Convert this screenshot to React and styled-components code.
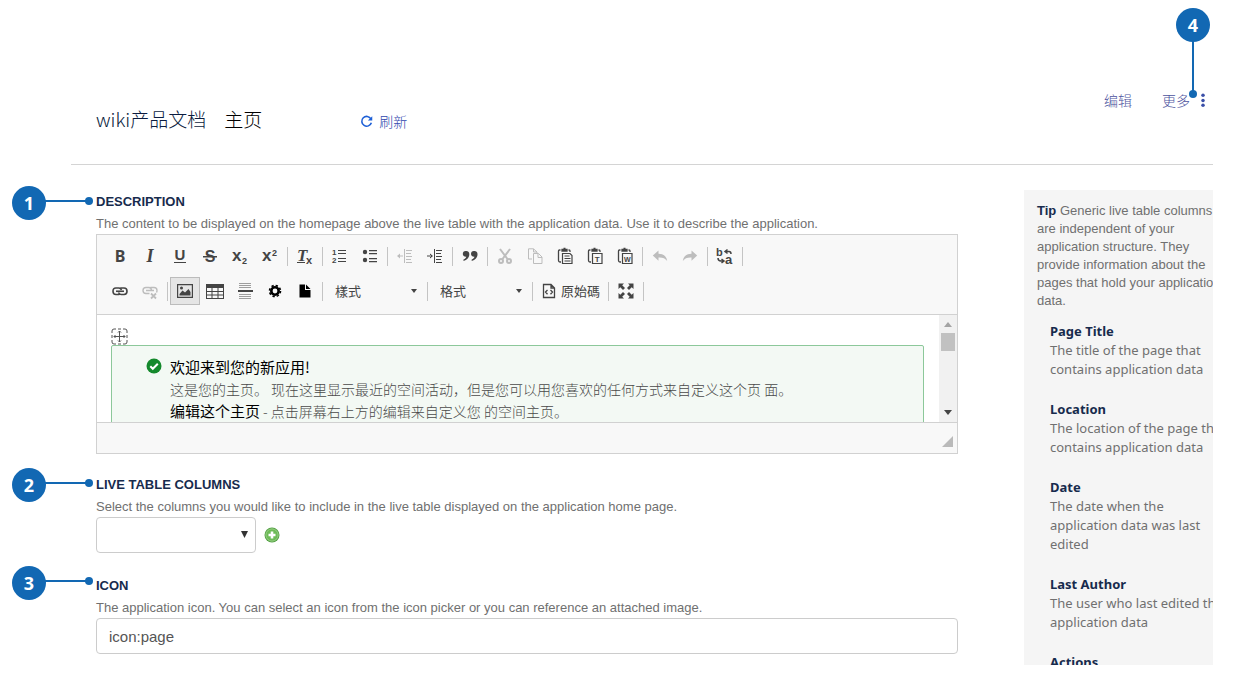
import React from 'react';
import styled, { createGlobalStyle } from "styled-components";

export default function App() {
    return(
        <>
        <GlobalStyle/>
        <Page>
            <Header>
                <Crumbs>
                    <SpaceLink href="#space">wiki产品文档</SpaceLink>
                    <PageName>主页</PageName>
                </Crumbs>
                <RefreshButton type="button">
                    <Icon name="refresh" size={14}/>
                    刷新
                </RefreshButton>
                <HeaderActions>
                    <ActionLink href="#edit">编辑</ActionLink>
                    <MoreButton type="button">
                        更多
                        <Icon name="dots" size={14}/>
                    </MoreButton>
                </HeaderActions>
            </Header>

            <Main>
                <Form>
                    <Section>
                        <Heading id="description-label">DESCRIPTION</Heading>
                        <Hint>The content to be displayed on the homepage above the live table with the application data. Use it to describe the application.</Hint>
                        <Editor/>
                    </Section>
                    <Section>
                        <Heading as="label" htmlFor="columns">LIVE TABLE COLUMNS</Heading>
                        <Hint>Select the columns you would like to include in the live table displayed on the application home page.</Hint>
                        <ColumnsRow>
                            <SelectBox>
                                <ColumnSelect id="columns" defaultValue="">
                                    <option value=""></option>
                                </ColumnSelect>
                                <SelectArrow viewBox="0 0 8 8"><path d="M0 0h8L4 8z"/></SelectArrow>
                            </SelectBox>
                            <AddButton type="button" aria-label="Add column">
                                <Icon name="add" size={16}/>
                            </AddButton>
                        </ColumnsRow>
                    </Section>
                    <Section>
                        <Heading as="label" htmlFor="icon">ICON</Heading>
                        <Hint>The application icon. You can select an icon from the icon picker or you can reference an attached image.</Hint>
                        <TextInput id="icon" type="text" defaultValue="icon:page"/>
                    </Section>
                </Form>

                <Aside>
                    <AsideContent>
                        <Tip><strong>Tip</strong> Generic live table columns are independent of your application structure. They provide information about the pages that hold your application data.</Tip>
                        <ColumnList>
                            {columns.map((column) => (
                                <div key={column.name}>
                                    <ColumnName>{column.name}</ColumnName>
                                    {column.text && <ColumnText>{column.text}</ColumnText>}
                                </div>
                            ))}
                        </ColumnList>
                    </AsideContent>
                </Aside>
            </Main>

            <Callout $top={186}>1</Callout>
            <Callout $top={468}>2</Callout>
            <Callout $top={566}>3</Callout>
            <MenuCallout>4</MenuCallout>
        </Page>
        </>
    )
}

const columns = [
    { name: "Page Title", text: "The title of the page that contains application data" },
    { name: "Location", text: "The location of the page that contains application data" },
    { name: "Date", text: "The date when the application data was last edited" },
    { name: "Last Author", text: "The user who last edited the application data" },
    { name: "Actions" },
];

function Editor() {
    return(
        <EditorBox>
            <Toolbar role="toolbar" aria-label="Editor toolbar">
                <ToolbarRow>
                    <Tool label="Bold"><Letter>B</Letter></Tool>
                    <Tool label="Italic"><SerifLetter>I</SerifLetter></Tool>
                    <Tool label="Underline"><Icon name="underline"/></Tool>
                    <Tool label="Strikethrough"><Icon name="strike"/></Tool>
                    <Tool label="Subscript"><Icon name="subscript"/></Tool>
                    <Tool label="Superscript"><Icon name="superscript"/></Tool>
                    <Divider/>
                    <Tool label="Remove format"><Icon name="removeFormat"/></Tool>
                    <Divider/>
                    <Tool label="Numbered list"><Icon name="numbered"/></Tool>
                    <Tool label="Bulleted list"><Icon name="bulleted"/></Tool>
                    <Divider/>
                    <Tool label="Decrease indent" disabled><Icon name="outdent"/></Tool>
                    <Tool label="Increase indent"><Icon name="indent"/></Tool>
                    <Divider/>
                    <Tool label="Block quote"><Icon name="quote"/></Tool>
                    <Divider/>
                    <Tool label="Cut" disabled><Icon name="cut"/></Tool>
                    <Tool label="Copy" disabled><Icon name="copy"/></Tool>
                    <Tool label="Paste"><Icon name="paste"/></Tool>
                    <Tool label="Paste as plain text"><Icon name="pasteText"/></Tool>
                    <Tool label="Paste from Word"><Icon name="pasteWord"/></Tool>
                    <Divider/>
                    <Tool label="Undo" disabled><Icon name="undo"/></Tool>
                    <Tool label="Redo" disabled><Icon name="redo"/></Tool>
                    <Divider/>
                    <Tool label="Find and replace"><Icon name="replace" size={18}/></Tool>
                    <Divider/>
                </ToolbarRow>
                <ToolbarRow>
                    <Tool label="Link"><Icon name="link"/></Tool>
                    <Tool label="Unlink" disabled><Icon name="unlink"/></Tool>
                    <Divider/>
                    <Tool label="Image" active><Icon name="image"/></Tool>
                    <Tool label="Table"><Icon name="table" size={18}/></Tool>
                    <Tool label="Horizontal line"><Icon name="rule"/></Tool>
                    <Tool label="Macro"><Icon name="gear"/></Tool>
                    <Tool label="Office file"><Icon name="file"/></Tool>
                    <Divider/>
                    <Combo label="樣式"/>
                    <Divider/>
                    <Combo label="格式"/>
                    <Divider/>
                    <SourceButton type="button"><Icon name="source"/>原始碼</SourceButton>
                    <Divider/>
                    <Tool label="Maximize"><Icon name="maximize"/></Tool>
                    <Divider/>
                </ToolbarRow>
            </Toolbar>
            <EditorBody>
                <EditArea contentEditable suppressContentEditableWarning role="textbox" aria-labelledby="description-label">
                    <MoveHandle viewBox="0 0 17 17">
                        <path d="M1 5V3q0-2 2-2h2M12 1h2q2 0 2 2v2M16 12v2q0 2-2 2h-2M5 16H3q-2 0-2-2v-2M7 1h3M7 16h3M1 7v3M16 7v3M8.5 3v11M3 8.5h11M7 4.5L8.5 3 10 4.5M7 12.5L8.5 14l1.500-1.500M4.500 7L3 8.500 4.500 10M12.500 7L14 8.500 12.500 10"/>
                    </MoveHandle>
                    <Notice>
                        <Icon name="check"/>
                        <NoticeText>
                            <NoticeTitle>欢迎来到您的新应用!</NoticeTitle>
                            <p>这是您的主页。 现在这里显示最近的空间活动，但是您可以用您喜欢的任何方式来自定义这个页 面。</p>
                            <p><NoticeMark>编辑这个主页</NoticeMark> - 点击屏幕右上方的编辑来自定义您 的空间主页。</p>
                        </NoticeText>
                    </Notice>
                </EditArea>
                <ScrollBar aria-hidden="true">
                    <svg width="8" height="5" fill="#a3a3a3"><path d="M0 5l4-5 4 5z"/></svg>
                    <Thumb/>
                    <svg width="8" height="5" fill="#444"><path d="M0 0l4 5 4-5z"/></svg>
                </ScrollBar>
            </EditorBody>
            <EditorFooter>
                <svg width="11" height="11" fill="#bababa"><path d="M11 0v11H0z"/></svg>
            </EditorFooter>
        </EditorBox>
    )
}

function Tool({ label, active, disabled, children }) {
    return(
        <ToolButton type="button" aria-label={label} aria-pressed={active} $active={active} disabled={disabled}>
            {children}
        </ToolButton>
    )
}

function Combo({ label }) {
    return(
        <ComboBox>
            <ComboSelect aria-label={label} defaultValue="">
                <option value="">{label}</option>
            </ComboSelect>
            <ComboArrow viewBox="0 0 6 4"><path d="M0 0h6L3 4z"/></ComboArrow>
        </ComboBox>
    )
}

const clipboard = (
    <path d="M3.500 2H2.500Q1.500 2 1.500 3v9.500q0 1.500 1.500 1.500h1M11.500 2h.5q1 0 1 1v1M5 3V1.500h5V3zM6.500.5h2" fill="none" stroke="currentColor" strokeWidth="1.300"/>
);

const shapes = {
    underline: <>
        <text x="8" y="12" textAnchor="middle" fontSize="15" fontWeight="700">U</text>
        <path d="M2 14h12v1H2z"/>
    </>,
    strike: <>
        <text x="8" y="14" textAnchor="middle" fontSize="16" fontWeight="700">S</text>
        <path d="M1 8h14v1.500H1z"/>
    </>,
    subscript: <>
        <text x="0" y="13" fontSize="17" fontWeight="700">x</text>
        <text x="10" y="16" fontSize="9" fontWeight="700">2</text>
    </>,
    superscript: <>
        <text x="0" y="13" fontSize="17" fontWeight="700">x</text>
        <text x="10" y="8" fontSize="9" fontWeight="700">2</text>
    </>,
    removeFormat: <>
        <text x="0" y="13" fontSize="17" fontWeight="700" fontStyle="italic" fontFamily="Liberation Serif, serif">T</text>
        <path d="M0 14h8v1H0z"/>
        <text x="9" y="16" fontSize="11" fontWeight="700">x</text>
    </>,
    numbered: <>
        <text x="0" y="7" fontSize="8" fontWeight="700">1</text>
        <text x="0" y="15" fontSize="8" fontWeight="700">2</text>
        <path d="M6 2h8v1H6zM6 5h8v1H6zM6 10h8v1H6zM6 13h8v1H6z"/>
    </>,
    bulleted: <>
        <circle cx="3" cy="4" r="2.200"/><circle cx="3" cy="12" r="2.200"/>
        <path d="M7 2h8v1.200H7zM7 5h8v1.200H7zM7 10h8v1.200H7zM7 13h8v1.200H7z"/>
    </>,
    outdent: <path d="M7 1h1v14H7zM9 2h6v1H9zM9 5h5v1H9zM9 8h6v1H9zM9 11h5v1H9zM9 14h6v1H9zM2 7.500h4v1H2zM0 8l3-2.500v5z"/>,
    indent: <path d="M7 1h1v14H7zM9 2h6v1H9zM9 5h5v1H9zM9 8h6v1H9zM9 11h5v1H9zM9 14h6v1H9zM0 7.500h4v1H0zM6 8L3 5.500v5z"/>,
    quote: <path d="M4 3a3 3 0 0 1 3.300 3.200C7.300 9.500 5 12 1.500 13v-1.500c1.600-.6 2.600-1.500 2.800-2.700C2.300 9 .8 7.700.8 6A3 3 0 0 1 4 3zM12.200 3a3 3 0 0 1 3.300 3.200c0 3.300-2.300 5.800-5.800 6.800v-1.500c1.600-.6 2.600-1.500 2.800-2.700C10.500 9 9 7.700 9 6a3 3 0 0 1 3.200-3z"/>,
    cut: <g fill="none" stroke="currentColor" strokeWidth="2">
        <path d="M3 1l7.500 10M13 1L5.500 11"/><circle cx="4" cy="13" r="2"/><circle cx="12" cy="13" r="2"/>
    </g>,
    copy: <path d="M5 11H1.500V.8h5L10 4v1M6.500 5.500h5L15 9v6.500H6.500zM11 5.500V9.500h4M6.500 1v3H10" fill="none" stroke="currentColor"/>,
    paste: <>{clipboard}<path d="M5.500 5.500h7.500l2 2v8H5.500zM7.500 8h5M7.500 10.500h6M7.500 13h6" fill="none" stroke="currentColor" strokeWidth="1.200"/></>,
    pasteText: <>{clipboard}<path d="M5.500 5.500h9.500v10H5.500z" fill="none" stroke="currentColor" strokeWidth="1.200"/>
        <text x="10.250" y="13.500" textAnchor="middle" fontSize="8" fontWeight="700">T</text></>,
    pasteWord: <>{clipboard}<path d="M5.500 5.500h9.500v10H5.500z" fill="none" stroke="currentColor" strokeWidth="1.200"/>
        <text x="10.250" y="13.500" textAnchor="middle" fontSize="7" fontWeight="700">W</text></>,
    undo: <path d="M6.500 2.500v3.200c4.500 0 8 2.300 8.700 7.300-2-2.700-4.500-3.700-8.700-3.500v3.200L.8 7.500z"/>,
    redo: <path d="M9.500 2.500v3.200C5 5.700 1.500 8 .8 13c2-2.700 4.500-3.700 8.700-3.500v3.200l5.700-5.200z"/>,
    replace: <>
        <text x="0" y="9" fontSize="11" fontWeight="700">b</text>
        <text x="9" y="17" fontSize="13" fontWeight="700">a</text>
        <path d="M9 4.500h4q2 0 2 2.500M11.500 2.500L9 4.500l2.500 2M2 11q0 3 3 3h2.500M5.500 12l2.500 2-2.500 2" fill="none" stroke="currentColor" strokeWidth="1.500"/>
    </>,
    link: <g fill="none" stroke="currentColor" strokeWidth="1.600">
        <path d="M8.500 10.500q-.5 1-1.500 1H4Q1 11.500 1 8.200T4 5h3q1.500 0 2.500 2M7.500 6q.5-1 1.500-1h3q3 0 3 3.200t-3 3.300H9q-1.500 0-2.500-2"/><path d="M4 8.250h8"/>
    </g>,
    unlink: <g fill="none" stroke="currentColor" strokeWidth="1.400">
        <path d="M7.500 10.500H4Q1 10.500 1 7.500t3-3h3q2 0 2.500 2.500M7.500 5.500q.5-1 1.500-1h3q3 0 3 3 0 1-.5 2M4 7.500h8"/><path d="M9 10.500l5 5M14 10.500l-5 5" strokeWidth="1.800"/>
    </g>,
    image: <path fillRule="evenodd" d="M0 1h16v14H0zM1.200 2.200v11.600h13.600V2.200zM2.500 12.500V11l3-3.500 2.500 2L11.500 6l2 3v3.500zM3 5a1.500 1.500 0 1 0 3 0 1.500 1.500 0 1 0-3 0z"/>,
    table: <path fillRule="evenodd" d="M0 2h18v15H0zM1 6v3h4.500V6zM6.500 6v3h5V6zM12.500 6v3H17V6zM1 10v2.500h4.500V10zM6.500 10v2.500h5V10zM12.500 10v2.500H17V10zM1 13.500V16h4.500v-2.500zM6.500 13.500V16h5v-2.500zM12.500 13.500V16H17v-2.500z"/>,
    rule: <>
        <path d="M2 0h12v1H2zM2 2h12v1H2zM2 4h12v1H2zM2 11h12v1H2zM2 13h12v1H2zM2 15h12v1H2z" opacity=".5"/><path d="M1 7h15v2H1z"/>
    </>,
    gear: <g fill="none" stroke="#000">
        <circle cx="8" cy="8" r="3.700" strokeWidth="2.600"/>
        <circle cx="8" cy="8" r="5.500" strokeWidth="1.600" strokeDasharray="2.320 2"/>
    </g>,
    file: <path fill="#000" d="M2.500 1.500h5.500v5.500h5.500v7.500h-11zM9 1.500l4.500 4.500H9z"/>,
    source: <path d="M2.500 1.500h7.500l3.500 3.500v9.500h-11zM10 1.500V5h3.500M6.500 7L4.500 9l2 2.200M9.500 7l2 2-2 2.200" fill="none" stroke="currentColor" strokeWidth="1.300"/>,
    maximize: <path d="M.5.500h5.500L4.200 2.300 7 5 5 7 2.300 4.200.5 6zM15.500.5V6l-1.800-1.800L11 7 9 5l2.700-2.700L10 .5zM15.500 15.500H10l1.700-1.800L9 11l2-2 2.700 2.700 1.800-1.700zM.5 15.500V10l1.800 1.700L5 9l2 2-2.800 2.700L6 15.500z"/>,
    refresh: <g fill="none" stroke="#1d5fd6" strokeWidth="1.800">
        <path d="M13 10A5.600 5.600 0 1 1 12.500 5.500"/><path d="M14 2.500v5H9z" fill="#1d5fd6" stroke="none"/>
    </g>,
    dots: <g fill="#3a4fa8"><circle cx="8" cy="2.500" r="2"/><circle cx="8" cy="8.500" r="2"/><circle cx="8" cy="14" r="2"/></g>,
    check: <>
        <circle cx="8" cy="8" r="7.500" fill="#14892c"/>
        <path d="M4.300 8.300l2.500 2.500 5-5" fill="none" stroke="#fff" strokeWidth="2"/>
    </>,
    add: <>
        <circle cx="8" cy="8" r="7.500" fill="#4c9c3c"/>
        <circle cx="8" cy="8" r="6.200" fill="#6dbb57" stroke="#a9d898" strokeWidth=".8"/>
        <path d="M8 4.500v7M4.500 8h7" stroke="#fff" strokeWidth="2.600"/>
    </>,
};

function Icon({ name, size = 16 }) {
    return(
        <Svg viewBox={name === "table" || name === "replace" ? "0 0 18 18" : "0 0 16 16"} width={size} height={size} aria-hidden="true">
            {shapes[name]}
        </Svg>
    )
}

const GlobalStyle=createGlobalStyle`
    * { box-sizing: border-box; }
    body {
        margin: 0;
        background: #fff;
        color: #707070;
        font-family: "Liberation Sans", "Noto Sans CJK SC", sans-serif;
        font-size: 13px;
    }
    p, h2, dl, dt, dd { margin: 0; }
    button, select, input { font: inherit; color: inherit; }
    button { border: 0; background: none; padding: 0; }
`;

const Svg=styled.svg`
    display: block;
    flex: none;
    overflow: visible;
    fill: currentColor;
    font-family: "Liberation Sans", sans-serif;
`;
const Page=styled.div`
    position: relative;
    display: flex;
    flex-direction: column;
    height: 100vh;
    min-height: 665px;
    overflow: hidden;
    padding: 0 40px 11px 71px;
`;
const Header=styled.header`
    display: flex;
    align-items: center;
    flex: none;
    height: 165px;
    padding: 77px 3px 0 25px;
    border-bottom: 1px solid #d4d4d4;
    font-family: "Noto Sans CJK SC", sans-serif;
    font-weight: 300;
`;
const Crumbs=styled.nav`
    display: flex;
    gap: 18px;
    padding-bottom: 4px;
    font-size: 19px;
    line-height: 26px;
`;
const SpaceLink=styled.a`
    color: #0b1c40;
    text-decoration: none;
`;
const PageName=styled.span`
    color: #000;
`;
const RefreshButton=styled.button`
    display: flex;
    align-items: center;
    gap: 5px;
    margin-left: 98px;
    font-size: 14px;
    color: #2f45ad;
`;
const HeaderActions=styled.div`
    display: flex;
    align-items: center;
    gap: 30px;
    margin-left: auto;
    padding-bottom: 42px;
    font-size: 14px;
    color: #4d539e;
`;
const ActionLink=styled.a`
    color: inherit;
    text-decoration: none;
`;
const MoreButton=styled.button`
    display: flex;
    align-items: center;
    gap: 6px;
`;
const Main=styled.main`
    display: grid;
    grid-template-columns: minmax(0, 1fr) 189px;
    grid-template-rows: minmax(0, 1fr);
    gap: 66px;
    flex: 1;
    min-height: 0;
    padding: 25px 0 0 25px;
`;
const Form=styled.form`
    display: flex;
    flex-direction: column;
    gap: 19px;
`;
const Section=styled.section`
    display: flex;
    flex-direction: column;
`;
const Heading=styled.h2`
    margin: 0;
    font-size: 13px;
    line-height: 24px;
    font-weight: 700;
    color: #172b4d;
`;
const Hint=styled.p`
    line-height: 20px;
`;

const EditorBox=styled.div`
    border: 1px solid #d1d1d1;
`;
const Toolbar=styled.div`
    display: flex;
    flex-direction: column;
    gap: 7px;
    padding: 7px 8px 9px;
    background: #f8f8f8;
    border-bottom: 1px solid #d1d1d1;
    color: #444;
`;
const ToolbarRow=styled.div`
    display: flex;
    align-items: center;
`;
const ToolButton=styled.button`
    display: flex;
    align-items: center;
    justify-content: center;
    width: 30px;
    height: 28px;
    color: ${(props) => props.disabled ? "#bdbdbd" : "#444"};
    ${(props) => props.$active && "background: #e5e5e5; border: 1px solid #bcbcbc;"}
`;
const Divider=styled.span`
    width: 1px;
    height: 19px;
    margin: 0 2px;
    background: #c4c4c4;
`;
const Letter=styled.span`
    font-family: "Noto Sans", sans-serif;
    font-size: 16px;
    line-height: 16px;
    font-weight: 700;
`;
const SerifLetter=styled(Letter)`
    font-family: "Liberation Serif", serif;
    font-style: italic;
    font-size: 18px;
`;
const ComboBox=styled.span`
    position: relative;
    width: 100px;
`;
const ComboSelect=styled.select`
    appearance: none;
    width: 100%;
    height: 28px;
    padding: 0 10px 2px;
    border: 0;
    background: transparent;
    font-family: "Noto Sans CJK TC", sans-serif;
`;
const ComboArrow=styled.svg`
    position: absolute;
    top: 12px;
    right: 8px;
    width: 6px;
    height: 4px;
    fill: #444;
`;
const SourceButton=styled.button`
    display: flex;
    align-items: center;
    gap: 4px;
    height: 28px;
    padding: 0 6px;
    font-family: "Noto Sans CJK TC", sans-serif;
    line-height: 20px;
`;
const EditorBody=styled.div`
    display: flex;
    height: 107px;
    overflow: hidden;
`;
const EditArea=styled.div`
    flex: 1;
    padding: 13px 15px 0 14px;
    outline: 0;
`;
const MoveHandle=styled.svg`
    display: block;
    width: 17px;
    height: 17px;
    fill: none;
    stroke: #555;
`;
const Notice=styled.div`
    display: flex;
    gap: 8px;
    height: 120px;
    padding: 10px 34px;
    border: 1px solid #8cc89a;
    border-radius: 2px;
    background: #f3f9f4;
    font-family: "Noto Sans CJK SC", sans-serif;
    font-size: 14px;
    line-height: 22px;
    font-weight: 300;
    color: #4a4a4a;

    svg { margin-top: 2px; }
`;
const NoticeText=styled.div`
    white-space: nowrap;
`;
const NoticeTitle=styled.p`
    font-size: 15px;
    font-weight: 400;
    color: #000;
`;
const NoticeMark=styled.span`
    font-size: 15px;
    font-weight: 400;
    color: #000;
`;
const ScrollBar=styled.div`
    display: flex;
    flex-direction: column;
    align-items: center;
    width: 18px;
    padding: 7px 0;
    background: #f1f1f1;
`;
const Thumb=styled.div`
    width: 14px;
    height: 18px;
    margin: 6px 0 auto;
    background: #c1c1c1;
`;
const EditorFooter=styled.div`
    display: flex;
    justify-content: flex-end;
    align-items: flex-end;
    height: 31px;
    padding: 0 4px 6px;
    border-top: 1px solid #d1d1d1;
    background: #f8f8f8;
`;

const ColumnsRow=styled.div`
    display: flex;
    align-items: center;
    gap: 8px;
    padding-bottom: 2px;
`;
const SelectBox=styled.div`
    position: relative;
    width: 160px;
`;
const ColumnSelect=styled.select`
    appearance: none;
    display: block;
    width: 100%;
    height: 36px;
    border: 1px solid #ccc;
    border-radius: 4px;
    background: #fff;
`;
const SelectArrow=styled.svg`
    position: absolute;
    top: 14px;
    right: 8px;
    width: 7px;
    height: 7px;
    fill: #333;
`;
const AddButton=styled.button`
    display: block;
`;
const TextInput=styled.input`
    width: 100%;
    height: 36px;
    padding: 0 12px;
    border: 1px solid #ccc;
    border-radius: 4px;
    background: #fff;
    font-size: 15px;
    color: #555;
`;

const Aside=styled.aside`
    overflow: hidden;
    background: #f5f5f5;
`;
const AsideContent=styled.div`
    width: 210px;
    padding: 12px 0 0 13px;
`;
const Tip=styled.p`
    padding-right: 6px;
    line-height: 18px;

    strong { color: #172b4d; }
`;
const ColumnList=styled.dl`
    display: flex;
    flex-direction: column;
    gap: 20px;
    padding: 11px 0 0 13px;
    font-family: "Noto Sans", sans-serif;
`;
const ColumnName=styled.dt`
    line-height: 20px;
    font-weight: 700;
    color: #172b4d;
`;
const ColumnText=styled.dd`
    line-height: 19px;
`;

// numbered markers that point at the parts of the form
const Badge=styled.div`
    position: absolute;
    width: 34px;
    height: 34px;
    border-radius: 50%;
    background: #1268b3;
    color: #fff;
    font-family: "Noto Sans", sans-serif;
    font-size: 18px;
    line-height: 34px;
    font-weight: 700;
    text-align: center;

    &::before, &::after {
        content: "";
        position: absolute;
        background: #1268b3;
    }
    &::after {
        width: 8px;
        height: 8px;
        border-radius: 50%;
    }
`;
const Callout=styled(Badge)`
    top: ${(props) => props.$top}px;
    left: 12px;

    &::before { left: 33px; top: 14px; width: 42px; height: 2px; }
    &::after { left: 73px; top: 11px; }
`;
const MenuCallout=styled(Badge)`
    top: 8px;
    right: 43px;

    &::before { left: 16px; top: 33px; width: 2px; height: 50px; }
    &::after { left: 13px; top: 82px; }
`;
